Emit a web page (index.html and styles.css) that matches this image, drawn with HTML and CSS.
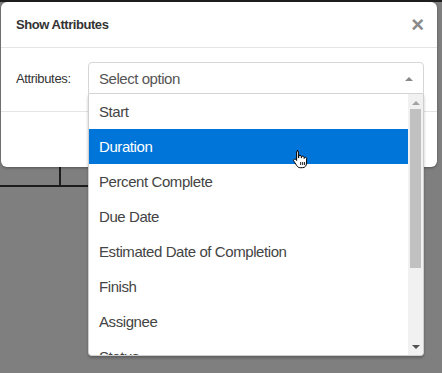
FILE: index.html
```
<!DOCTYPE html>
<html lang="en">
<head>
    <meta charset="UTF-8">
    <title>Show Attributes</title>
    <link rel="stylesheet" href="styles.css">
</head>
<body>

    <div class="page">
        <div class="topbar"></div>
        <div class="grid-row">
            <div class="cell first"></div>
            <div class="cell"></div>
        </div>
    </div>

    <div class="modal">
        <div class="modal-header">
            <span class="modal-title">Show Attributes</span>
            <span class="close">&times;</span>
        </div>
        <div class="modal-body">
            <label class="field-label">Attributes:</label>
            <div class="select-wrap">
                <div class="select-box">
                    <span>Select option</span>
                    <span class="caret-up"></span>
                </div>
                <div class="dropdown">
                    <ul class="options">
                        <li>Start</li>
                        <li class="active">Duration</li>
                        <li>Percent Complete</li>
                        <li>Due Date</li>
                        <li>Estimated Date of Completion</li>
                        <li>Finish</li>
                        <li>Assignee</li>
                        <li>Status</li>
                    </ul>
                    <div class="scrollbar">
                        <span class="arrow up"></span>
                        <div class="thumb"></div>
                        <span class="arrow down"></span>
                    </div>
                </div>
                <svg class="cursor" width="16" height="20" viewBox="0 0 16 20">
                    <path d="M5 1.5c.8 0 1.4.6 1.4 1.4v6h.3V7.6c0-.8.6-1.3 1.3-1.3s1.3.5 1.3 1.3v1.3h.2V8.3c0-.7.6-1.2 1.3-1.2s1.2.5 1.2 1.2v1.1h.2c0-.7.5-1.1 1.2-1.1s1.2.5 1.2 1.2v4.6c0 2.4-1.5 4.6-4.2 4.6H8.2c-1.5 0-2.5-.7-3.4-2L1.9 12.2c-.5-.7-.3-1.5.3-1.9.6-.4 1.3-.2 1.8.4l.6.8V2.9c0-.8.6-1.4 1.4-1.4z" fill="#fff" stroke="#000" stroke-width="1"/>
                    <path d="M8.7 13v3M10.7 13v3M12.6 13v3" stroke="#000" stroke-width="0.9"/>
                </svg>
            </div>
        </div>
        <div class="modal-footer"></div>
    </div>

</body>
</html>
```

FILE: styles.css
```
body {
    margin: 0;
    font-family: "Liberation Sans", Arial, sans-serif;
    background-color: #7f7f7f;
    width: 442px;
    height: 373px;
    overflow: hidden;
    position: relative;
}
.page {
    height: 100%;
}
.topbar {
    height: 2px;
    background-color: #1e1e1e;
}
.grid-row {
    display: flex;
    margin-top: 165px;
    width: 88px;
    height: 18px;
    border-bottom: 2px solid #1c1c1c;
}
.cell.first {
    width: 59px;
    border-right: 2px solid #1c1c1c;
}
.modal {
    position: absolute;
    top: 2px;
    left: 1px;
    width: 436px;
    height: 165px;
    background-color: #fff;
    border-radius: 6px;
    box-shadow: 0 1px 3px rgba(0, 0, 0, 0.35);
}
.modal-header {
    display: flex;
    align-items: center;
    justify-content: space-between;
    height: 45px;
    padding: 0 15px;
    border-bottom: 1px solid #e5e5e5;
}
.modal-title {
    font-size: 13px;
    font-weight: bold;
    letter-spacing: -0.45px;
    color: #333;
}
.close {
    font-size: 22px;
    font-weight: bold;
    color: #8a8a8a;
    line-height: 1;
    margin-right: -2px;
}
.modal-body {
    display: flex;
    align-items: center;
    padding: 14px 13px 17px 15px;
    border-bottom: 1px solid #e5e5e5;
}
.field-label {
    width: 72px;
    font-size: 13px;
    letter-spacing: -0.35px;
    color: #333;
}
.select-wrap {
    position: relative;
    flex: 1;
}
.select-box {
    display: flex;
    align-items: center;
    justify-content: space-between;
    height: 30px;
    padding: 0 10px;
    border: 1px solid #d6d6d6;
    border-radius: 4px 4px 0 0;
    font-size: 15px;
    letter-spacing: -0.45px;
    color: #555;
}
.caret-up {
    width: 0;
    height: 0;
    border-left: 4px solid transparent;
    border-right: 4px solid transparent;
    border-bottom: 4px solid #888;
    margin-top: 2px;
}
.dropdown {
    position: absolute;
    top: 32px;
    left: 0;
    right: 0;
    height: 261px;
    display: flex;
    background-color: #fff;
    border: 1px solid #cfcfcf;
    border-top: none;
    border-radius: 0 0 4px 4px;
    overflow: hidden;
    box-shadow: 0 2px 3px rgba(0, 0, 0, 0.25);
}
.options {
    list-style: none;
    margin: 0;
    padding: 0;
    flex: 1;
}
.options li {
    height: 35px;
    line-height: 35px;
    padding-left: 10px;
    font-size: 15px;
    letter-spacing: -0.42px;
    color: #444;
}
.options li.active {
    background-color: #0075d9;
    color: #fff;
}
.scrollbar {
    width: 15px;
    background-color: #f1f1f1;
    display: flex;
    flex-direction: column;
    align-items: center;
}
.arrow {
    width: 0;
    height: 0;
    border-left: 4px solid transparent;
    border-right: 4px solid transparent;
}
.arrow.up {
    border-bottom: 4px solid #a3a3a3;
    margin: 7px 0 4px;
}
.arrow.down {
    border-top: 4px solid #505050;
    margin-top: 77px;
}
.thumb {
    width: 11px;
    height: 159px;
    background-color: #c1c1c1;
}
.cursor {
    position: absolute;
    left: 204px;
    top: 87px;
}
```
